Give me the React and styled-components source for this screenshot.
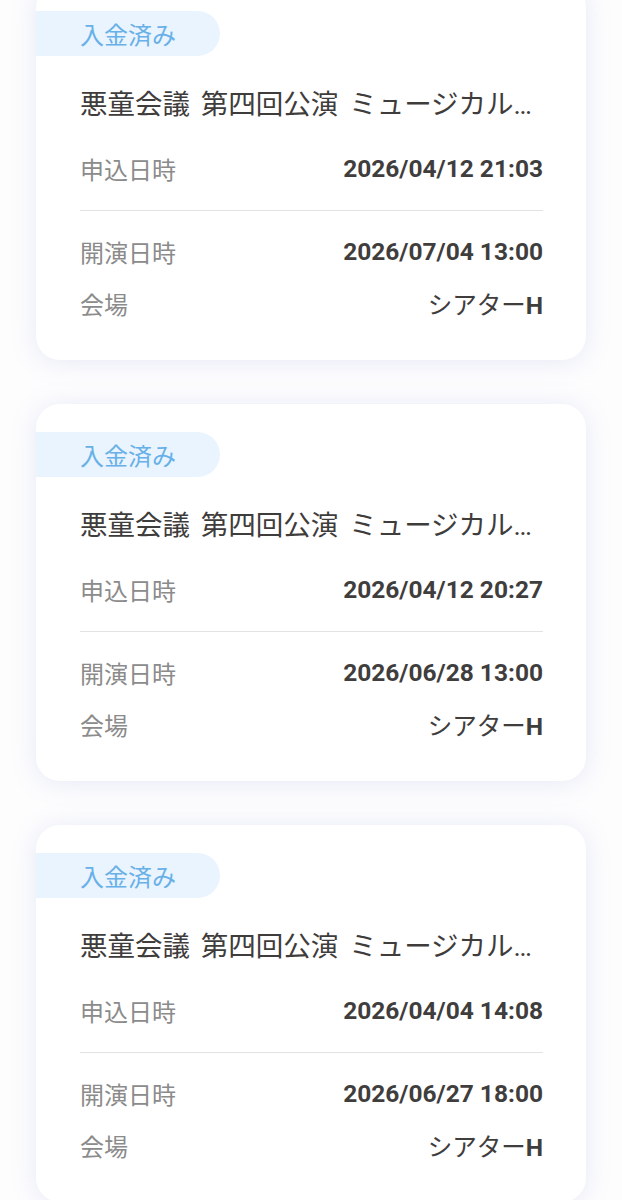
import React from 'react';
import styled, { createGlobalStyle } from 'styled-components';

const orders = [
  { applied: '2026/04/12 21:03', show: '2026/07/04 13:00' },
  { applied: '2026/04/12 20:27', show: '2026/06/28 13:00' },
  { applied: '2026/04/04 14:08', show: '2026/06/27 18:00' }
];

const title = '悪童会議 第四回公演 ミュージカル「ミラクル・アイランド」';

export default function App() {
  return (
    <>
      <GlobalStyle />
      <List>
        {orders.map((o, i) => (
          <Card key={i}>
            <Badge>入金済み</Badge>
            <Title>{title}</Title>
            <Section>
              <Row>
                <Label>申込日時</Label>
                <Value>{o.applied}</Value>
              </Row>
            </Section>
            <Divider />
            <Section $gap>
              <Row>
                <Label>開演日時</Label>
                <Value>{o.show}</Value>
              </Row>
              <Row>
                <Label>会場</Label>
                <Value>
                  <Kana>シアター</Kana>H
                </Value>
              </Row>
            </Section>
          </Card>
        ))}
      </List>
    </>
  );
}

const GlobalStyle = createGlobalStyle`
  html, body {
    margin: 0;
    padding: 0;
    background: #fdfdfe;
    font-family: Roboto, "Noto Sans CJK JP", sans-serif;
    overflow: hidden;
  }
`;

const List = styled.div`
  display: flex;
  flex-direction: column;
  gap: 44px;
  padding: 0 36px;
  margin-top: -17px;
`;

const Card = styled.article`
  background: #ffffff;
  border-radius: 24px;
  box-shadow: 0 2px 26px rgba(120, 135, 200, 0.17);
  padding: 28px 43px 37px 0;
  height: 377px;
  box-sizing: border-box;
`;

const Badge = styled.div`
  width: 184px;
  height: 45px;
  box-sizing: border-box;
  padding-left: 44px;
  display: flex;
  align-items: center;
  background: #eaf4fe;
  border-radius: 0 23px 23px 0;
  color: #68b0e8;
  font-size: 24px;
`;

const Title = styled.h2`
  margin: 29px 0 0 44px;
  font-size: 27.5px;
  line-height: 40px;
  font-weight: 400;
  word-spacing: 4px;
  color: #3f3c3c;
  white-space: nowrap;
  overflow: hidden;
  text-overflow: ellipsis;
`;

const Section = styled.div`
  margin-left: 44px;
  padding-top: ${(p) => (p.$gap ? '20px' : '23px')};
  padding-bottom: ${(p) => (p.$gap ? '0' : '22px')};
  display: flex;
  flex-direction: column;
  gap: 12px;
`;

const Row = styled.div`
  display: flex;
  justify-content: space-between;
  align-items: center;
  height: 40px;
`;

const Label = styled.span`
  font-size: 24px;
  color: #8b8b8b;
`;

const Value = styled.span`
  font-size: 24.5px;
  font-weight: 700;
  color: #403d3d;
`;

const Kana = styled.span`
  font-weight: 400;
`;

const Divider = styled.hr`
  margin: 0 0 0 44px;
  border: none;
  border-top: 1px solid #e2e2e2;
`;
